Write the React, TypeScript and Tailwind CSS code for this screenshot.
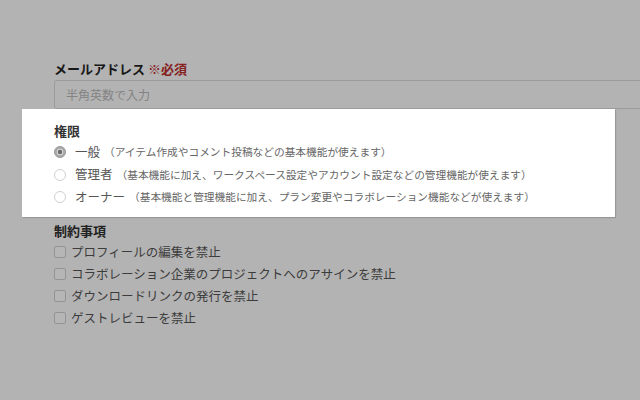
import React from "react";

const roles = [
  { name: "一般", note: "（アイテム作成やコメント投稿などの基本機能が使えます）", checked: true },
  { name: "管理者", note: "（基本機能に加え、ワークスペース設定やアカウント設定などの管理機能が使えます）", checked: false },
  { name: "オーナー", note: "（基本機能と管理機能に加え、プラン変更やコラボレーション機能などが使えます）", checked: false },
];

const limits = [
  "プロフィールの編集を禁止",
  "コラボレーション企業のプロジェクトへのアサインを禁止",
  "ダウンロードリンクの発行を禁止",
  "ゲストレビューを禁止",
];

const Radio: React.FC<{ checked: boolean }> = ({ checked }) => (
  <svg width="12" height="12" viewBox="0 0 12 12" className="shrink-0">
    {checked ? (
      <>
        <circle cx="6" cy="6" r="5.5" fill="#a8a8a8" stroke="#9a9a9a" />
        <circle cx="6" cy="6" r="3.2" fill="#d8d8d8" />
        <circle cx="6" cy="6" r="2.2" fill="#6a6a6a" />
      </>
    ) : (
      <circle cx="6" cy="6" r="5.5" fill="#ffffff" stroke="#cfcfcf" />
    )}
  </svg>
);

const App: React.FC = () => {
  return (
    <div
      className="w-[640px] h-[400px] overflow-hidden bg-[#b3b3b3]"
      style={{ fontFamily: '"Noto Sans CJK JP", "Noto Sans", sans-serif' }}
    >
      <div className="pt-[61px] pl-[54px]">
        {/* Email */}
        <div className="h-[16px] leading-[16px] text-[13px] font-bold text-[#181818]">
          メールアドレス <span className="text-[#86201f]">※必須</span>
        </div>
        <div className="mt-[3px] h-[29px] w-[700px] border border-[#9b9b9b] rounded-[3px] pl-[11px] flex items-center text-[12px] text-[#838383]">
          半角英数で入力
        </div>

        {/* Roles (highlighted) */}
        <div className="-ml-[32px] w-[593px] h-[108px] bg-white pl-[32px] pt-[14px] shadow-[1px_1px_1px_rgba(0,0,0,0.15)]">
          <div className="h-[16px] leading-[16px] text-[13px] font-bold text-[#333]">権限</div>
          <div className="mt-[2px] flex flex-col">
            {roles.map((r) => (
              <div key={r.name} className="h-[22.5px] flex items-center">
                <Radio checked={r.checked} />
                <span className="ml-[9px] text-[12.5px] text-[#555]">{r.name}</span>
                <span className="ml-[4px] text-[10.7px] text-[#666]">{r.note}</span>
              </div>
            ))}
          </div>
        </div>

        {/* Restrictions */}
        <div className="mt-[6px] h-[16px] leading-[16px] text-[13px] font-bold text-[#222]">制約事項</div>
        <div className="mt-[2px] flex flex-col">
          {limits.map((l) => (
            <div key={l} className="h-[22px] flex items-center">
              <span className="w-[12px] h-[12px] shrink-0 rounded-[2px] border border-[#949494] bg-[#b6b6b6]" />
              <span className="ml-[5px] text-[12.5px] text-[#3c3c3c]">{l}</span>
            </div>
          ))}
        </div>
      </div>
    </div>
  );
};

export default App;
